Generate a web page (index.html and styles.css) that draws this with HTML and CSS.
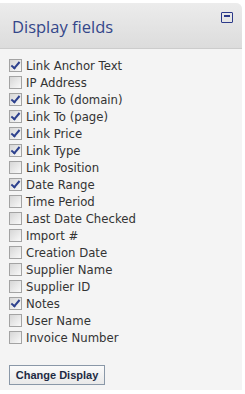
FILE: index.html
```html
<!DOCTYPE html>
<html lang="en">
<head>
  <meta charset="UTF-8">
  <title>Display fields</title>
  <link rel="stylesheet" href="styles.css">
</head>
<body>

  <div class="panel">
    <div class="panel-head">
      <h2>Display fields</h2>
      <span class="collapse"></span>
    </div>

    <div class="panel-body">
      <label class="campo"><input type="checkbox" checked> Link Anchor Text</label>
      <label class="campo"><input type="checkbox"> IP Address</label>
      <label class="campo"><input type="checkbox" checked> Link To (domain)</label>
      <label class="campo"><input type="checkbox" checked> Link To (page)</label>
      <label class="campo"><input type="checkbox" checked> Link Price</label>
      <label class="campo"><input type="checkbox" checked> Link Type</label>
      <label class="campo"><input type="checkbox"> Link Position</label>
      <label class="campo"><input type="checkbox" checked> Date Range</label>
      <label class="campo"><input type="checkbox"> Time Period</label>
      <label class="campo"><input type="checkbox"> Last Date Checked</label>
      <label class="campo"><input type="checkbox"> Import #</label>
      <label class="campo"><input type="checkbox"> Creation Date</label>
      <label class="campo"><input type="checkbox"> Supplier Name</label>
      <label class="campo"><input type="checkbox"> Supplier ID</label>
      <label class="campo"><input type="checkbox" checked> Notes</label>
      <label class="campo"><input type="checkbox"> User Name</label>
      <label class="campo"><input type="checkbox"> Invoice Number</label>

      <button>Change Display</button>
    </div>
  </div>

</body>
</html>
```

FILE: styles.css
```css
* {
  box-sizing: border-box;
}

body {
  margin: 0;
  padding: 3px 3px 4px 0;
  background: #ffffff;
  font-family: 'DejaVu Sans', sans-serif;
}

.panel {
  background: #f4f4f4;
  border-top-right-radius: 6px;
  overflow: hidden;
}

.panel-head {
  display: flex;
  justify-content: space-between;
  align-items: flex-start;
  height: 46px;
  padding: 0 9px 0 12px;
  background: linear-gradient(#ececec, #dcdcdc);
  border-bottom: 1px solid #cccccc;
}

.panel-head h2 {
  margin: 0;
  padding-top: 12px;
  font-family: 'Open Sans', sans-serif;
  font-weight: 400;
  font-size: 16.5px;
  color: #34478a;
}

.collapse {
  width: 12px;
  height: 11px;
  margin-top: 9px;
  border: 1px solid #2c3a8a;
  border-radius: 1px;
  position: relative;
}

.collapse::after {
  content: '';
  position: absolute;
  left: 2px;
  right: 2px;
  top: 2px;
  height: 2px;
  background: #2c3a8a;
}

.panel-body {
  padding: 8px 9px 6px;
  height: 341px;
}

.campo {
  display: flex;
  align-items: center;
  gap: 4px;
  height: 17px;
  font-size: 11.7px;
  color: #333333;
}

.campo input {
  appearance: none;
  width: 13px;
  height: 13px;
  margin: 0;
  border: 1px solid #a3a3a3;
  background: linear-gradient(135deg, #d6d6d6, #f9f9f9);
  display: flex;
  align-items: center;
  justify-content: center;
}

.campo input:checked::after {
  content: '';
  width: 3px;
  height: 7px;
  margin-top: -2px;
  border: solid #2d418e;
  border-width: 0 2px 2px 0;
  transform: rotate(40deg);
}

button {
  margin-top: 19px;
  height: 20px;
  width: 96px;
  padding: 0;
  background: linear-gradient(#fbfbfb, #e9e9e9);
  border: 1px solid #8a98a8;
  font-family: 'Liberation Sans', sans-serif;
  font-weight: 700;
  font-size: 11px;
  color: #1e2b44;
}
```
